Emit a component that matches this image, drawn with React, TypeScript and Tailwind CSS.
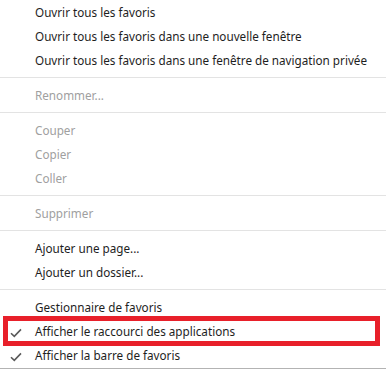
type Item = { label: string; disabled?: boolean; checked?: boolean; boxed?: boolean }

const groups: Item[][] = [
  [
    { label: 'Ouvrir tous les favoris' },
    { label: 'Ouvrir tous les favoris dans une nouvelle fenêtre' },
    { label: 'Ouvrir tous les favoris dans une fenêtre de navigation privée' },
  ],
  [{ label: 'Renommer...', disabled: true }],
  [
    { label: 'Couper', disabled: true },
    { label: 'Copier', disabled: true },
    { label: 'Coller', disabled: true },
  ],
  [{ label: 'Supprimer', disabled: true }],
  [{ label: 'Ajouter une page...' }, { label: 'Ajouter un dossier...' }],
  [
    { label: 'Gestionnaire de favoris' },
    { label: 'Afficher le raccourci des applications', checked: true, boxed: true },
    { label: 'Afficher la barre de favoris', checked: true },
  ],
]

function Check() {
  return (
    <svg width="12" height="10" viewBox="0 0 12 10" className="absolute left-[10px] top-[8px]">
      <path d="M1 5.2 L4.3 8.4 L11 1.4" fill="none" stroke="#5a5a5a" strokeWidth="1.6" />
    </svg>
  )
}

export default function App() {
  return (
    <div className="w-[386px] h-[370px] bg-white overflow-hidden font-['Noto_Sans',sans-serif] text-[11.7px]">
      <div className="pt-px border-b border-[#b3b3b3]">
        {groups.map((group, gi) => (
          <div key={gi}>
            {gi > 0 && (
              <div className="pt-[4px] pb-[6px]">
                <div className="h-px bg-[#e3e3e3]" />
              </div>
            )}
            {group.map((item) => (
              <div
                key={item.label}
                className={`relative h-[24px] flex items-center pl-[35px] ${
                  item.disabled ? 'text-[#a0a0a0]' : 'text-[#1e1e1e]'
                }`}
              >
                {item.checked && <Check />}
                <span>{item.label}</span>
                {item.boxed && (
                  <div className="absolute left-[3px] right-[6px] top-[-4px] bottom-[-2px] border-[5px] border-[#e8202a]" />
                )}
              </div>
            ))}
          </div>
        ))}
      </div>
    </div>
  )
}
